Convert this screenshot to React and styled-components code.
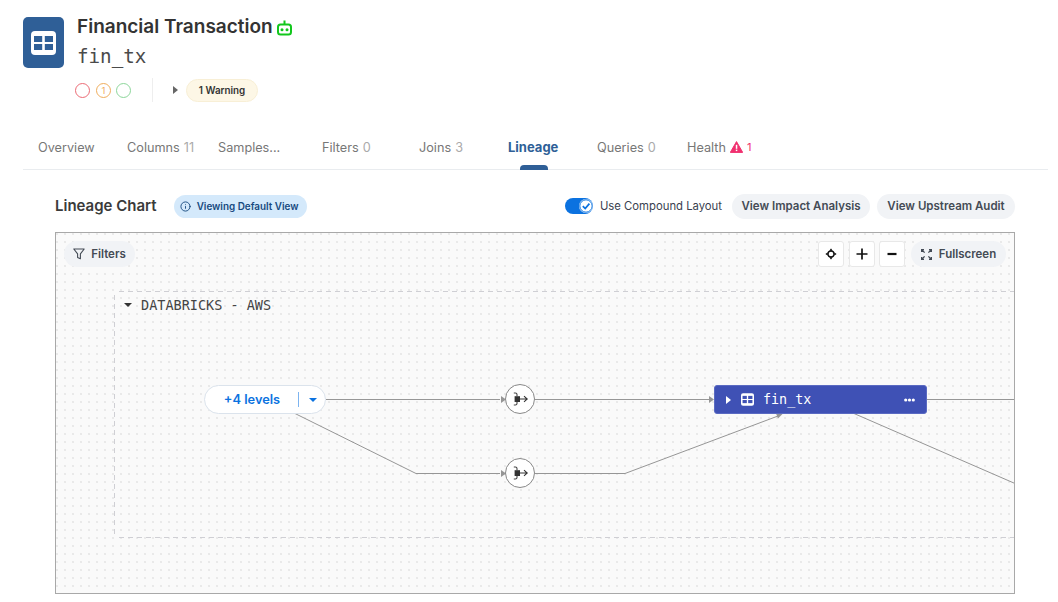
import React from "react";
import styled, { createGlobalStyle } from "styled-components";
import { Info } from "lucide-react";

const Global = createGlobalStyle`
  html, body { margin: 0; padding: 0; background: #fff; overflow: hidden; }
  body { font-family: "Inter", "Liberation Sans", sans-serif; color: #333; }
  * { box-sizing: border-box; }
`;
const MONO = `"DejaVu Sans Mono", "Liberation Mono", monospace`;

const Page = styled.div`width: 1058px; height: 602px; display: flex; flex-direction: column;`;
const Header = styled.header`display: flex; gap: 13px; padding: 17px 0 0 23px; height: 128px;`;
const Logo = styled.div`width: 41px; height: 51px; border-radius: 5px; background: #2f5f97; display: flex; align-items: center; justify-content: center;`;
const HeadBody = styled.div`display: flex; flex-direction: column;`;
const TitleRow = styled.div`display: flex; align-items: center; gap: 4px; height: 20px;`;
const Title = styled.h1`margin: 0; font-size: 19px; line-height: 20px; font-weight: 600; color: #333;`;
const Slug = styled.div`font-family: ${MONO}; font-size: 19.2px; line-height: 24px; margin-top: 8px; color: #4a4a4a;`;
const StatusRow = styled.div`display: flex; align-items: center; height: 24px; margin-top: 9px; margin-left: -2px;`;
const Ring = styled.span`
  width: 15px; height: 15px; border-radius: 50%; border: 1px solid ${p => p.$c}; margin-right: ${p => p.$mr}px;
  display: flex; align-items: center; justify-content: center; font-size: 9.5px; color: ${p => p.$c};
`;
const VDivider = styled.span`width: 1px; height: 24px; background: #eee; margin: 0 20px 0 21px;`;
const WarnCaret = styled.span`width: 0; height: 0; border-left: 5px solid #666; border-top: 4px solid transparent; border-bottom: 4px solid transparent; margin-right: 8px;`;
const WarnPill = styled.span`
  height: 23px; width: 72px; border-radius: 12px; background: #fdf7e6; border: 1px solid #f8efd6;
  font-size: 9.8px; font-weight: 600; color: #333; display: flex; align-items: center; justify-content: center;
`;

const Tabs = styled.nav`display: flex; height: 42px; margin-left: 23px; width: 1025px; padding-left: 15px; border-bottom: 1px solid #e9ecef;`;
const Tab = styled.div`
  position: relative; width: ${p => p.$w}px; flex: none; height: 38px; display: flex; align-items: center; gap: 4px;
  font-size: ${p => (p.$active ? 13 : 12.7)}px; white-space: nowrap; color: ${p => (p.$active ? "#2f5f97" : "#777")}; font-weight: ${p => (p.$active ? 700 : 400)};
`;
const Count = styled.span`color: #aaa;`;
const AlertCount = styled.span`color: #f0306f; font-size: 11px;`;
const Indicator = styled.span`position: absolute; left: 12px; bottom: -4px; width: 28px; height: 5px; background: #2f5f97; border-radius: 4px 4px 0 0;`;

const Section = styled.section`display: flex; flex-direction: column; margin: 24px 43px 0 55px; flex: 1;`;
const ToolRow = styled.div`display: flex; align-items: center; height: 25px; margin-bottom: 13px;`;
const H2 = styled.h2`margin: -3px 17px 0 0; font-size: 15px; font-weight: 600; color: #3a3a3a;`;
const ViewPill = styled.div`
  height: 23px; padding: 0 9px 0 6px; border-radius: 12px; background: #d4e9fb; color: #17497f; margin-top: -1px;
  font-size: 9.9px; font-weight: 600; display: flex; align-items: center; gap: 6px;
`;
const Spacer = styled.div`flex: 1;`;
const Toggle = styled.span`width: 28px; height: 16px; border-radius: 8px; background: #0b72e0; position: relative; margin: -2px 7px 0 0;`;
const Knob = styled.span`position: absolute; right: 0; top: 1px; width: 14px; height: 14px; border-radius: 50%; background: #fff; display: flex; align-items: center; justify-content: center;`;
const ToggleLabel = styled.span`font-size: 11.3px; color: #3a3f50; margin: -1px 10px 0 0;`;
const PillBtn = styled.button`
  height: 25px; width: ${p => p.$w}px; border: 0; border-radius: 13px; background: #f1f3f6; color: #444b55; padding: 0 0 2px;
  font: 600 11.5px "Inter", sans-serif; margin-left: ${p => p.$ml || 0}px;
`;

const Canvas = styled.div`
  position: relative; height: 362px; border: 1px solid #a8a8a8; overflow: hidden; background-color: #fafafa;
  background-image: radial-gradient(circle, #e9e9e9 0.7px, transparent 1px);
  background-size: 8px 8px; background-position: -3px -3px;
`;
const Edges = styled.svg`position: absolute; left: 0; top: 0;`;
const Overlay = styled.div`position: absolute; top: 8px; display: flex; align-items: center;`;
const LeftOverlay = styled(Overlay)`left: 8px;`;
const RightOverlay = styled(Overlay)`right: 8px;`;
const CanvasPill = styled.div`
  height: 26px; border-radius: 13px; background: #f1f3f6; color: #444b55; font-size: 11.5px; font-weight: 600;
  display: flex; align-items: center; justify-content: center; gap: ${p => p.$gap}px; width: ${p => p.$w}px; margin-left: ${p => p.$ml || 0}px;
`;
const IconBtn = styled.div`
  width: 26px; height: 26px; background: #fff; border: 1px solid #e8e8e8; border-radius: 3px; margin-left: ${p => p.$ml || 0}px;
  display: flex; align-items: center; justify-content: center; color: #222;
`;
const dash = "#cfcfd4";
const Group = styled.div`
  position: absolute; left: 58px; top: 58px; width: 1000px; height: 247px;
  background-image:
    repeating-linear-gradient(90deg, ${dash} 0 5px, transparent 5px 9px),
    repeating-linear-gradient(90deg, ${dash} 0 5px, transparent 5px 9px),
    repeating-linear-gradient(180deg, ${dash} 0 5px, transparent 5px 9px);
  background-size: 100% 1px, 100% 1px, 1px 100%;
  background-position: 5px 0, 5px 100%, 0 4px;
  background-repeat: no-repeat;
  display: flex; align-items: flex-start; padding: 7px 0 0 10px; gap: 9px; font-family: ${MONO}; font-size: 13.5px; color: #444; line-height: 14px;
`;
const DownCaret = styled.span`width: 0; height: 0; margin-top: 5px; border-top: 4px solid #333; border-left: 4px solid transparent; border-right: 4px solid transparent;`;
const LevelsNode = styled.div`
  position: absolute; left: 148px; top: 152px; width: 122px; height: 29px; border-radius: 15px; background: #fff; border: 1px solid #dbe3ec;
  display: flex; align-items: center; color: #0b72e0; font-size: 12.8px; font-weight: 600;
`;
const LevelsText = styled.span`width: 93px; text-align: center; padding-left: 1px;`;
const LevelsSep = styled.span`width: 1px; height: 15px; background: #7db4f0;`;
const BlueCaret = styled.span`width: 0; height: 0; margin-left: 10px; border-top: 4px solid #0b72e0; border-left: 4px solid transparent; border-right: 4px solid transparent;`;
const JoinNode = styled.div`
  position: absolute; left: ${p => p.$x}px; top: ${p => p.$y}px; width: 30px; height: 30px; border-radius: 50%; background: #fff; border: 1px solid #888;
  display: flex; align-items: center; justify-content: center;
`;
const TableNode = styled.div`
  position: absolute; left: 658px; top: 152px; width: 213px; height: 29px; border-radius: 3px; background: #3f51b5; border: 1px solid #5a6ac2;
  display: flex; align-items: center; color: #fff; font-family: ${MONO}; font-size: 13.4px; padding: 0 11px 0 11px;
`;
const RightCaret = styled.span`width: 0; height: 0; margin-right: 10px; border-left: 5px solid #fff; border-top: 4px solid transparent; border-bottom: 4px solid transparent;`;
const NodeLabel = styled.span`margin-left: 9px; flex: 1;`;

const TableGlyph = ({ size = 25, h = 24, fg = "#fff", bg = "#2f5f97" }) => (
  <svg width={size} height={h} viewBox="0 0 25 24">
    <rect width="25" height="24" rx="4" fill={fg} />
    <rect x="3" y="5" width="8.2" height="6" fill={bg} />
    <rect x="13.8" y="5" width="8.2" height="6" fill={bg} />
    <rect x="3" y="13" width="8.2" height="6" fill={bg} />
    <rect x="13.8" y="13" width="8.2" height="6" fill={bg} />
  </svg>
);
const Robot = () => (
  <svg width="15" height="16" viewBox="0 0 15 16" style={{ marginTop: 2 }}>
    <rect x="1" y="4.5" width="13" height="10" rx="2.5" fill="none" stroke="#12c71d" strokeWidth="2" />
    <rect x="6.5" y="0.5" width="2" height="4" fill="#12c71d" />
    <circle cx="5" cy="9.8" r="1.5" fill="#12c71d" />
    <circle cx="10" cy="9.8" r="1.5" fill="#12c71d" />
  </svg>
);
const WarnTri = () => (
  <svg width="13" height="12" viewBox="0 0 13 12">
    <path d="M6.5 .6 L12.7 11.4 H.3 Z" fill="#f0306f" stroke="#f0306f" strokeLinejoin="round" />
    <rect x="5.8" y="3.8" width="1.5" height="4" fill="#fff" />
    <rect x="5.8" y="8.6" width="1.5" height="1.5" fill="#fff" />
  </svg>
);
const JoinGlyph = () => (
  <svg width="20" height="20" viewBox="0 0 20 20" fill="none">
    <rect x="4.6" y="7.2" width="5.4" height="5.8" fill="#333" />
    <path d="M3.8 4 H5.4 Q7 4 7 5.5 V7.2" stroke="#444" strokeWidth="1.1" />
    <path d="M3.8 16 H5.4 Q7 16 7 14.5 V13" stroke="#444" strokeWidth="1.1" />
    <path d="M10 10 H17 M14 7.2 L17.2 10 L14 12.8" stroke="#333" strokeWidth="1.1" />
  </svg>
);
const Recenter = () => (
  <svg width="12" height="12" viewBox="0 0 12 12" fill="none" stroke="#111">
    <circle cx="6" cy="6" r="3" strokeWidth="1.4" />
    <path d="M6 .8 L4.9 2.4 H7.1 Z M6 11.2 L4.9 9.6 H7.1 Z M.8 6 L2.4 4.9 V7.1 Z M11.2 6 L9.6 4.9 V7.1 Z" fill="#111" strokeWidth=".6" />
  </svg>
);
const PlusGlyph = () => (
  <svg width="12" height="12" viewBox="0 0 12 12"><path d="M6 .5 V11.5 M.5 6 H11.5" stroke="#111" strokeWidth="1.7" /></svg>
);
const MinusGlyph = () => (
  <svg width="10" height="4" viewBox="0 0 10 4"><path d="M.5 2 H9.5" stroke="#111" strokeWidth="2.2" /></svg>
);
const FullGlyph = () => (
  <svg width="11" height="11" viewBox="0 0 11 11" fill="none" stroke="#444b55" strokeWidth="1.3">
    <path d="M.6 3 V.6 H3 M.8 .8 L3.6 3.6" />
    <path d="M8 .6 H10.4 V3 M10.2 .8 L7.4 3.6" />
    <path d="M.6 8 V10.4 H3 M.8 10.2 L3.6 7.4" />
    <path d="M8 10.4 H10.4 V8 M10.2 10.2 L7.4 7.4" />
  </svg>
);
const Funnel = () => (
  <svg width="12" height="12" viewBox="0 0 12 12" fill="none" stroke="#444b55" strokeWidth="1.1" strokeLinejoin="round">
    <path d="M.8 1 H11.2 L7.4 5.8 V10.8 L4.6 9.4 V5.8 Z" />
  </svg>
);
const Check = () => (
  <svg width="14" height="14" viewBox="0 0 14 14" fill="none">
    <circle cx="7" cy="7" r="6.2" stroke="#0b72e0" strokeWidth="1" />
    <path d="M3.8 7.2 L6.2 9.6 L10.4 4.6" stroke="#0b72e0" strokeWidth="1.7" />
  </svg>
);
const Dots = () => (
  <svg width="11" height="4" viewBox="0 0 11 4" fill="#fff">
    <circle cx="1.7" cy="2" r="1.6" /><circle cx="5.5" cy="2" r="1.6" /><circle cx="9.3" cy="2" r="1.6" />
  </svg>
);

const edge = "#969696";
const EdgeLayer = () => (
  <Edges width="958" height="360" viewBox="56 233 958 360" fill="none">
    <g stroke={edge} strokeWidth="1">
      <path d="M326 399.5 H500" />
      <path d="M535 399.5 H710" />
      <path d="M295 413.5 L416 473.5 H500" />
      <path d="M535 473.5 H625 L778 416" />
      <path d="M927 399.5 H1015" />
      <path d="M854 413.5 L1015 483.5" />
    </g>
    <g fill={edge}>
      <path d="M501 396 L506 399.5 L501 403 Z" />
      <path d="M501 470 L506 473.5 L501 477 Z" />
      <path d="M709 396 L714 399.5 L709 403 Z" />
      <path d="M776 413.5 L783 413.6 L778 418.5 Z" />
    </g>
  </Edges>
);

const tabs = [
  { w: 89, label: "Overview" },
  { w: 91, label: "Columns", count: "11" },
  { w: 104, label: "Samples..." },
  { w: 97, label: "Filters", count: "0" },
  { w: 89, label: "Joins", count: "3" },
  { w: 89, label: "Lineage", active: true },
  { w: 90, label: "Queries", count: "0" },
  { w: 93, label: "Health", alert: "1" },
];

export default function App() {
  return (
    <Page>
      <Global />
      <Header>
        <Logo><TableGlyph /></Logo>
        <HeadBody>
          <TitleRow><Title>Financial Transaction</Title><Robot /></TitleRow>
          <Slug>fin_tx</Slug>
          <StatusRow>
            <Ring $c="#ec6b75" $mr={6} />
            <Ring $c="#f0ad5c" $mr={5}>1</Ring>
            <Ring $c="#8cd69a" $mr={0} />
            <VDivider />
            <WarnCaret />
            <WarnPill>1 Warning</WarnPill>
          </StatusRow>
        </HeadBody>
      </Header>
      <Tabs>
        {tabs.map(t => (
          <Tab key={t.label} $w={t.w} $active={t.active}>
            <span>{t.label}</span>
            {t.count && <Count>{t.count}</Count>}
            {t.alert && <WarnTri />}
            {t.alert && <AlertCount>{t.alert}</AlertCount>}
            {t.active && <Indicator />}
          </Tab>
        ))}
      </Tabs>
      <Section>
        <ToolRow>
          <H2>Lineage Chart</H2>
          <ViewPill><Info size={11} strokeWidth={2} />Viewing Default View</ViewPill>
          <Spacer />
          <Toggle><Knob><Check /></Knob></Toggle>
          <ToggleLabel>Use Compound Layout</ToggleLabel>
          <PillBtn $w={138}>View Impact Analysis</PillBtn>
          <PillBtn $w={138} $ml={7}>View Upstream Audit</PillBtn>
        </ToolRow>
        <Canvas>
          <Group><DownCaret />DATABRICKS - AWS</Group>
          <EdgeLayer />
          <LeftOverlay>
            <CanvasPill $w={71} $gap={6}><Funnel />Filters</CanvasPill>
          </LeftOverlay>
          <RightOverlay>
            <IconBtn><Recenter /></IconBtn>
            <IconBtn $ml={5}><PlusGlyph /></IconBtn>
            <IconBtn $ml={4}><MinusGlyph /></IconBtn>
            <CanvasPill $w={95} $ml={6} $gap={7}><FullGlyph />Fullscreen</CanvasPill>
          </RightOverlay>
          <LevelsNode><LevelsText>+4 levels</LevelsText><LevelsSep /><BlueCaret /></LevelsNode>
          <JoinNode $x={449} $y={151}><JoinGlyph /></JoinNode>
          <JoinNode $x={449} $y={225}><JoinGlyph /></JoinNode>
          <TableNode>
            <RightCaret />
            <TableGlyph size={13} h={13} bg="#3f51b5" />
            <NodeLabel>fin_tx</NodeLabel>
            <Dots />
          </TableNode>
        </Canvas>
      </Section>
    </Page>
  );
}
